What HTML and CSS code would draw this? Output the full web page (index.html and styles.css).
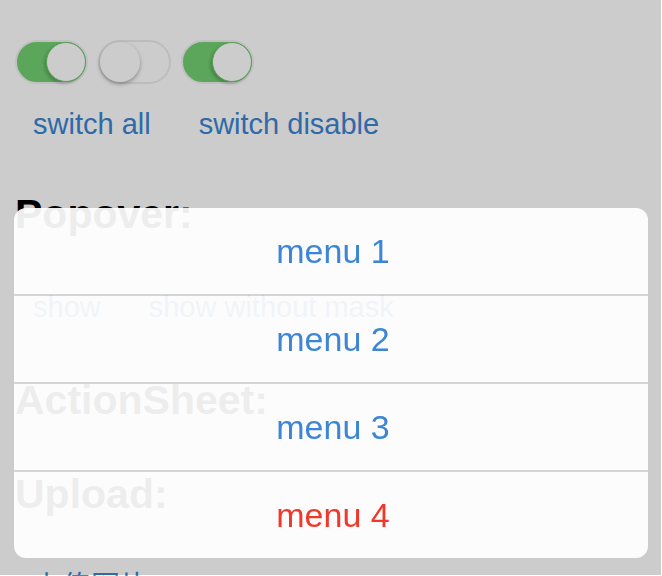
FILE: index.html
```html
<!DOCTYPE html>
<html>
<head>
<meta charset="utf-8">
<link rel="stylesheet" href="styles.css">
</head>
<body>
<div class="page">
  <div class="switches">
    <div class="switch on"><span class="knob"></span></div>
    <div class="switch off"><span class="knob"></span></div>
    <div class="switch on"><span class="knob"></span></div>
  </div>
  <div class="btns btns-switch">
    <span class="btn">switch all</span>
    <span class="btn">switch disable</span>
  </div>
  <h2 class="title title-popover">Popover:</h2>
  <div class="btns btns-show">
    <span class="btn">show</span>
    <span class="btn">show without mask</span>
  </div>
  <h2 class="title title-action">ActionSheet:</h2>
  <h2 class="title title-upload">Upload:</h2>
  <div class="btns btns-upload">
    <span class="btn">上传图片</span>
  </div>
</div>
<div class="mask"></div>
<div class="menu">
  <div class="item">menu 1</div>
  <div class="item">menu 2</div>
  <div class="item">menu 3</div>
  <div class="item danger">menu 4</div>
</div>
</body>
</html>
```

FILE: styles.css
```css
html, body {
  margin: 0;
  padding: 0;
  background: #ffffff;
  overflow: hidden;
  height: 100%;
}
body {
  font-family: "Liberation Sans", Arial, "Noto Sans CJK SC", sans-serif;
}
.page {
  padding: 40px 15px 0 15px;
}
.switches {
  display: flex;
  gap: 10px;
  height: 44px;
}
.switch {
  position: relative;
  width: 73px;
  height: 44px;
  box-sizing: border-box;
  border-radius: 22px;
}
.switch.on {
  background: #72d071;
  border: 2px solid #f0f0f0;
}
.switch.off {
  background: #ffffff;
  border: 2px solid #ececec;
}
.knob {
  position: absolute;
  top: 0;
  width: 40px;
  height: 40px;
  border-radius: 50%;
  background: #ffffff;
  box-sizing: border-box;
}
.switch.on .knob {
  right: 0;
  border: 1px solid #6fc86e;
  box-shadow: -2px 2px 3px rgba(0, 0, 0, 0.18);
}
.switch.off .knob {
  left: 0;
  box-shadow: 0 2px 4px rgba(0, 0, 0, 0.3);
}
.btns {
  display: flex;
  gap: 12px;
  line-height: 40px;
  font-size: 29px;
  color: #3a85d2;
}
.btn {
  padding: 0 18px;
}
.btns-switch {
  margin-top: 20px;
}
.title {
  margin: 0;
  font-size: 41px;
  line-height: 48px;
  font-weight: bold;
  color: #000000;
}
.title-popover {
  margin-top: 46px;
}
.btns-show {
  margin-top: 49px;
}
.title-action {
  margin-top: 49px;
}
.title-upload {
  margin-top: 46px;
}
.btns-upload {
  margin-top: 46px;
  font-family: "Noto Sans CJK SC", sans-serif;
}
.mask {
  position: fixed;
  left: 0;
  top: 0;
  right: 1px;
  bottom: 1px;
  background: rgba(0, 0, 0, 0.2);
}
.menu {
  position: fixed;
  left: 14px;
  right: 14px;
  bottom: 18px;
  background: #ffffff;
  opacity: 0.93;
  border-radius: 12px;
  overflow: hidden;
}
.item {
  height: 86px;
  line-height: 86px;
  text-align: center;
  font-size: 34px;
  color: #3180d6;
  padding-left: 4px;
}
.item + .item {
  border-top: 2px solid #d6d6d6;
}
.item.danger {
  color: #f32e1f;
}
```
